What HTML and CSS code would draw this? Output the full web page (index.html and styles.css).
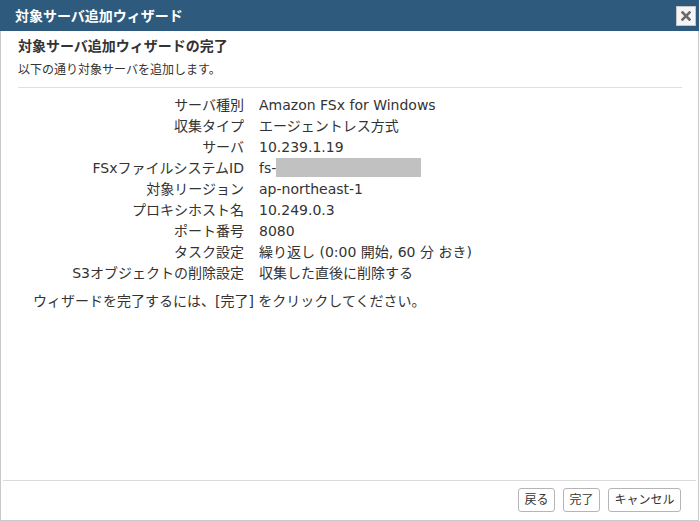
FILE: index.html
```html
<!DOCTYPE html>
<html lang="ja">
<head>
<meta charset="utf-8">
<title>対象サーバ追加ウィザード</title>
<link rel="stylesheet" href="styles.css">
</head>
<body>
<div class="dialog">
  <div class="titlebar">
    <span class="title">対象サーバ追加ウィザード</span>
    <button class="close" aria-label="閉じる">
      <svg width="10" height="10" viewBox="0 0 10 10"><path d="M1.5 1.5 L8.5 8.5 M8.5 1.5 L1.5 8.5" stroke="#6a6a6a" stroke-width="2.6" stroke-linecap="square"/></svg>
    </button>
  </div>
  <div class="content">
    <h1 class="heading">対象サーバ追加ウィザードの完了</h1>
    <p class="sub">以下の通り対象サーバを追加します。</p>
    <hr class="rule">
    <div class="summary">
      <div class="label">サーバ種別</div><div class="value">Amazon FSx for Windows</div>
      <div class="label">収集タイプ</div><div class="value">エージェントレス方式</div>
      <div class="label">サーバ</div><div class="value">10.239.1.19</div>
      <div class="label">FSxファイルシステムID</div><div class="value">fs-<span class="masked"></span></div>
      <div class="label">対象リージョン</div><div class="value">ap-northeast-1</div>
      <div class="label">プロキシホスト名</div><div class="value">10.249.0.3</div>
      <div class="label">ポート番号</div><div class="value">8080</div>
      <div class="label">タスク設定</div><div class="value">繰り返し (0:00 開始, 60 分 おき)</div>
      <div class="label">S3オブジェクトの削除設定</div><div class="value">収集した直後に削除する</div>
    </div>
    <p class="finish">ウィザードを完了するには、[完了] をクリックしてください。</p>
  </div>
  <div class="footer">
    <button class="btn">戻る</button>
    <button class="btn">完了</button>
    <button class="btn">キャンセル</button>
  </div>
</div>
</body>
</html>
```
FILE: styles.css
```css
* { box-sizing: border-box; }
html, body { margin: 0; padding: 0; background: #fff; }
body {
  font-family: "DejaVu Sans", "Noto Sans CJK JP", sans-serif;
  color: #333;
}
.dialog {
  width: 699px;
  height: 521px;
  display: flex;
  flex-direction: column;
  border-left: 1px solid #c9c9c9;
  border-right: 1px solid #c9c9c9;
  border-bottom: 1px solid #c9c9c9;
}
.titlebar {
  height: 31px;
  background: #2e5b7d;
  display: flex;
  align-items: center;
  justify-content: space-between;
  padding: 0 3px 0 15px;
  margin: 0 -1px;
}
.title {
  color: #fff;
  font-weight: bold;
  font-size: 14px;
  line-height: 20px;
}
.close {
  width: 20px;
  height: 20px;
  padding: 0;
  border: 1px solid #c5c5c5;
  background: #f5f5f5;
  display: flex;
  align-items: center;
  justify-content: center;
  margin-top: 1px;
}
.content {
  flex: 1;
  padding: 5px 16px 0 17px;
}
.heading {
  margin: 0;
  font-size: 14px;
  font-weight: bold;
  line-height: 20px;
}
.sub {
  margin: 5px 0 0;
  font-size: 12px;
  line-height: 18px;
}
.rule {
  margin: 8px 0 0;
  border: 0;
  border-top: 1px solid #e0e0e0;
  height: 0;
}
.summary {
  display: grid;
  grid-template-columns: 226px auto;
  column-gap: 15px;
  margin-top: 7px;
  font-size: 14px;
  line-height: 21px;
}
.label { text-align: right; white-space: nowrap; }
.value { white-space: nowrap; }
.masked {
  display: inline-block;
  width: 145px;
  height: 19px;
  background: #c1c1c1;
  vertical-align: -4px;
}
.finish {
  margin: 7px 0 0 15px;
  font-size: 14px;
  line-height: 21px;
}
.footer {
  margin: 0 2px;
  border-top: 1px solid #dadada;
  height: 40px;
  display: flex;
  justify-content: flex-end;
  align-items: flex-start;
  gap: 8px;
  padding: 7px 15px 0 0;
}
.btn {
  font-family: inherit;
  font-size: 12px;
  line-height: 20px;
  height: 24px;
  padding: 0 5.5px;
  color: #333;
  background: #fff;
  border: 1px solid #b5b5b5;
  border-radius: 3px;
}
```
